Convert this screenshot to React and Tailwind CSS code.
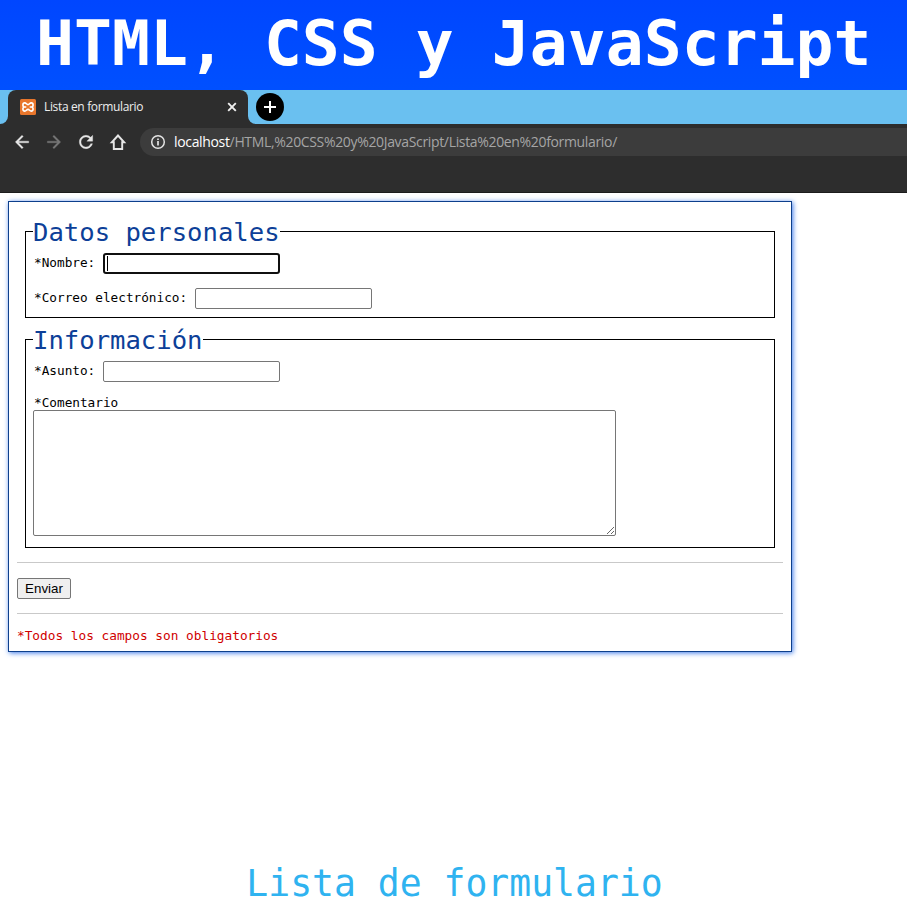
import React from "react";

const mono = "font-['DejaVu_Sans_Mono',monospace]";
const sans = "font-['Open_Sans',sans-serif]";

function NavIcon({ d, color }) {
  return (
    <svg className="h-5 w-5 shrink-0" viewBox="0 0 24 24" fill={color} stroke={color} strokeWidth="0.4">
      <path d={d} />
    </svg>
  );
}

function TabStrip() {
  return (
    <div className="flex h-[34px] bg-[#2d2d2d]">
      <div className="w-2 rounded-br-lg bg-[#6ac0f0]" />
      <div className="w-60 bg-[#6ac0f0]">
        <div className="flex h-full items-center rounded-t-lg bg-[#2d2d2d] pl-3 pr-2.5">
          <svg className="h-4 w-4 shrink-0" viewBox="0 0 16 16" fill="none">
            <rect width="16" height="16" rx="1.5" fill="#e8762c" />
            <path
              d="M6.300 8H4.800C3.500 8 2.900 7 2.900 5.900S3.700 3.900 4.800 3.900C6.300 3.900 6.600 5.600 8 5.600s1.700-1.700 3.200-1.700c1.100 0 1.900.9 1.900 2S12.500 8 11.200 8H9.700M4.800 8C3.500 8 2.900 9 2.900 10.100s.8 2 1.900 2c1.500 0 1.800-1.700 3.200-1.700s1.700 1.700 3.200 1.700c1.100 0 1.900-.9 1.900-2S12.500 8 11.200 8"
              stroke="#fff"
              strokeWidth="1.600"
            />
          </svg>
          <span className={`${sans} ml-2 whitespace-nowrap text-[12px] leading-4 tracking-[-0.35px] text-[#eeeeee]`}>
            Lista en formulario
          </span>
          <svg className="ml-auto h-3 w-3 shrink-0" viewBox="0 0 12 12" stroke="#f0f0f0" strokeWidth="1.900">
            <path d="M2.200 2.200l7.600 7.600M9.800 2.200l-7.600 7.600" />
          </svg>
        </div>
      </div>
      <div className="flex flex-1 rounded-bl-lg bg-[#6ac0f0] pl-2 pt-[3px]">
        <div className="flex h-7 w-7 items-center justify-center rounded-full bg-black">
          <svg className="h-3 w-3" viewBox="0 0 12 12" stroke="#fff" strokeWidth="2">
            <path d="M0 6h12M6 0v12" />
          </svg>
        </div>
      </div>
    </div>
  );
}

function Toolbar() {
  return (
    <div className="h-[69px] overflow-hidden border-b border-[#1c1c1c] bg-[#2d2d2d] pt-1">
      <div className="flex h-7 items-center gap-3 pl-3">
        <NavIcon color="#e6e6e6" d="M20 11H7.83l5.590-5.590L12 4l-8 8 8 8 1.410-1.410L7.830 13H20v-2z" />
        <NavIcon color="#777777" d="M12 4l-1.410 1.410L16.170 11H4v2h12.170l-5.580 5.590L12 20l8-8z" />
        <NavIcon
          color="#e6e6e6"
          d="M17.650 6.350C16.200 4.900 14.210 4 12 4c-4.420 0-7.990 3.580-7.990 8s3.570 8 7.990 8c3.730 0 6.840-2.550 7.730-6h-2.080c-.82 2.330-3.040 4-5.650 4-3.310 0-6-2.690-6-6s2.690-6 6-6c1.660 0 3.140.69 4.220 1.780L13 11h7V4l-2.350 2.350z"
        />
        <svg className="h-5 w-5 shrink-0" viewBox="0 0 20 20" fill="none" stroke="#e6e6e6" strokeWidth="1.900">
          <path d="M10 3.500L3.800 10.300h2v6.700h8.400v-6.700h2z" />
        </svg>
        <div className="flex h-7 flex-1 items-center rounded-l-full bg-[#3c3c3c] pl-[10px]">
          <svg className="h-4 w-4 shrink-0" viewBox="0 0 16 16" fill="none" stroke="#e4e4e4">
            <circle cx="8" cy="8" r="6.300" strokeWidth="1.500" />
            <path d="M8 7v4.500M8 4.400v1.700" strokeWidth="1.700" />
          </svg>
          <span className={`${sans} ml-2 whitespace-nowrap text-[14px] leading-5 tracking-[-0.34px] text-[#a5a5a5]`}>
            <span className="text-white">localhost</span>
            /HTML,%20CSS%20y%20JavaScript/Lista%20en%20formulario/
          </span>
        </div>
      </div>
    </div>
  );
}

function Legend({ children }) {
  return (
    <legend className={`${mono} block h-[33px] whitespace-nowrap text-[25.6px] leading-[35px] text-[#0d3f98]`}>
      {children}
    </legend>
  );
}

function Label({ children }) {
  return <label className="mb-0.5 ml-px mr-2 whitespace-nowrap">{children}</label>;
}

function ContactForm() {
  return (
    <form
      className={`${mono} ml-2 mt-2 h-[451px] w-[784px] border border-[#0d3f8c] px-2 pt-[13px] text-[12.73px] leading-4 text-black shadow-[1px_1px_5px_#3b78e8]`}
    >
      <fieldset className="mx-2 h-[103px] border border-black px-[7px]">
        <Legend>Datos personales</Legend>
        <div className="mt-[5px] flex h-[21px] items-center">
          <Label>*Nombre:</Label>
          <div className="flex h-[21px] w-[177px] items-center rounded-[3px] border-2 border-[#101010] pl-0.5">
            <span className="h-[15px] w-px bg-black" />
          </div>
        </div>
        <div className="mt-3.5 flex h-[21px] items-center">
          <Label>*Correo electrónico:</Label>
          <input className="h-[21px] w-[177px] rounded-[2px] border border-[#767676]" />
        </div>
      </fieldset>
      <fieldset className="mx-2 mt-[5px] h-[225px] border border-black px-[7px]">
        <Legend>Información</Legend>
        <div className="mt-[5px] flex h-[21px] items-center">
          <Label>*Asunto:</Label>
          <input className="h-[21px] w-[177px] rounded-[2px] border border-[#767676]" />
        </div>
        <div className="mt-3.5 flex h-3.5 items-center">
          <label className="ml-px">*Comentario</label>
        </div>
        <textarea className="block h-[126px] w-[583px] rounded-[2px] border border-[#767676]" />
      </fieldset>
      <hr className="mt-3.5 border-[#c9c9c9]" />
      <button
        type="button"
        className="mt-[15px] flex h-[21px] w-[54px] items-center justify-center rounded-[2px] border border-[#767676] bg-[#efefef] font-['Liberation_Sans',sans-serif] text-[13.333px] leading-none"
      >
        Enviar
      </button>
      <hr className="mt-3.5 border-[#c9c9c9]" />
      <p className="mt-3.5 text-[12.77px] text-[#d00000]">*Todos los campos son obligatorios</p>
    </form>
  );
}

export default function App() {
  return (
    <div className="flex h-[907px] w-[907px] flex-col overflow-hidden bg-white">
      <header className="h-[90px] bg-linear-to-b from-[#0046ff] to-[#0050ff]">
        <h1 className={`${mono} whitespace-pre pl-[36px] text-[63px] font-bold leading-[88px] tracking-[0.05px] text-white`}>
          HTML, CSS y JavaScript
        </h1>
      </header>
      <TabStrip />
      <Toolbar />
      <ContactForm />
      <h2 className={`${mono} mt-auto h-[48px] whitespace-pre pl-0.5 text-center text-[36.400px] leading-[50px] text-[#2fb3f0]`}>
        Lista de formulario
      </h2>
    </div>
  );
}
